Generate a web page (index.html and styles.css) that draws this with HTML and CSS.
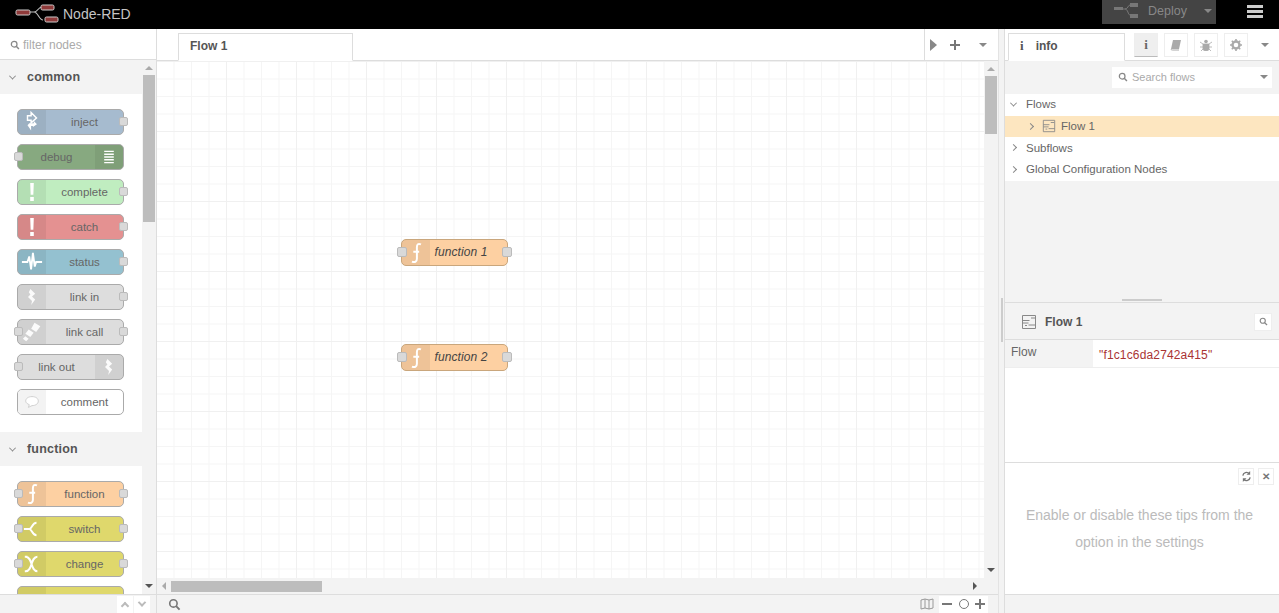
FILE: index.html
```html
<!DOCTYPE html>
<html lang="en">

<head>
    <meta charset="UTF-8">
    <title>Node-RED</title>
    <link rel="stylesheet" href="styles.css">
</head>

<body>
    <svg class="sprites" width="0" height="0">
        <symbol id="i-inject" viewBox="0 0 20 24">
            <path d="M9 1.500l6 6-6 5.500V10H5V5h4z" fill="none" stroke="#fff" stroke-width="1.600" />
            <path d="M5 15.500l2-2h5v-2.500l3.500 3.500-4.500 3v-1H9v5z" fill="#fff" />
        </symbol>
        <symbol id="i-list" viewBox="0 0 20 24">
            <path d="M4 5h12M4 8.500h12M4 12h12M4 15.500h12M4 19h12" stroke="#fff" stroke-width="1.800" />
        </symbol>
        <symbol id="i-alert" viewBox="0 0 20 24">
            <path d="M8 2h4l-.5 13h-3z M8 17.500h4V22H8z" fill="#fff" />
        </symbol>
        <symbol id="i-status" viewBox="0 0 24 24">
            <path d="M1 12h6l2-6 2 14 2-18 2 15 1.500-5H23" fill="none" stroke="#fff" stroke-width="2" />
        </symbol>
        <symbol id="i-link" viewBox="0 0 20 24">
            <path d="M8 2l6 6-4 3.500L14 15l-5 7 1-5-5-5 3-3-2-3z" fill="#fff" opacity=".9" />
        </symbol>
        <symbol id="i-call" viewBox="0 0 24 24">
            <path d="M15 1l7 4-5 7-6-4z M8 9l6 4-4 5-6-4z M4 17l4 3-3 3-4-3z" fill="#fff" opacity=".9" />
        </symbol>
        <symbol id="i-comment" viewBox="0 0 20 24">
            <path d="M3 11c0-3 3-5 7-5s7 2 7 5-3 5-7 5l-4 2 1-3c-2-.8-4-2.200-4-4z" fill="#fff" stroke="#ccc" />
        </symbol>
        <symbol id="i-func" viewBox="0 0 20 24">
            <path d="M15.500 2.500c-3-1.500-4.500 0-4.500 3v13c0 3-2 4.500-5.500 3M7 10.500h6.500" fill="none" stroke="#fff" stroke-width="2.200" />
        </symbol>
        <symbol id="i-switch" viewBox="0 0 20 24">
            <path d="M1 12h6c3 0 3-7 8-7M7 12c3 0 3 7 8 7" fill="none" stroke="#fff" stroke-width="2.200" />
        </symbol>
        <symbol id="i-change" viewBox="0 0 20 24">
            <path d="M3 4c8 0 5 16 13 16M3 20c8 0 5-16 13-16M2 4h3M2 20h3" fill="none" stroke="#fff" stroke-width="2.200" />
        </symbol>
        <symbol id="i-flow" viewBox="0 0 16 16">
            <path d="M1.500 1.500h13v13h-13z M1.500 6.500h7M7.500 11h7M1.500 9h6" fill="none" stroke="currentColor" />
            <path d="M10 4h4M4 11.500h2" stroke="currentColor" />
        </symbol>
        <symbol id="i-search" viewBox="0 0 12 12">
            <circle cx="5" cy="5" r="3.400" fill="none" stroke="currentColor" stroke-width="1.500" />
            <path d="M7.500 7.500l3.200 3.200" stroke="currentColor" stroke-width="1.800" />
        </symbol>
    </svg>

    <header class="topbar">
        <div class="logo">
            <svg width="44" height="20" viewBox="0 0 44 20">
                <path d="M14 8h5c4 0 4-5 8-5M19 8c4 0 5 8 9 8" fill="none" stroke="#bbb" stroke-width="1.200" />
                <rect x="1" y="6" width="14" height="5" rx="1.500" fill="#8f3a3a" stroke="#ccc" />
                <rect x="26" y="1" width="13" height="5" rx="1.500" fill="#8f3a3a" stroke="#ccc" />
                <rect x="30" y="13" width="13" height="5" rx="1.500" fill="#8f3a3a" stroke="#ccc" />
            </svg>
            <span>Node-RED</span>
        </div>
        <div class="deploy">
            <svg width="26" height="16" viewBox="0 0 26 16">
                <path d="M9 6h3c3 0 3-4 5-4M12 6c3 0 3 6 5 6" fill="none" stroke="#777" />
                <rect x="1" y="4" width="9" height="3" fill="#777" />
                <rect x="17" y="0" width="8" height="4" fill="#777" />
                <rect x="17" y="11" width="8" height="4" fill="#777" />
            </svg>
            <span class="deploy-label">Deploy</span>
            <span class="caret deploy-caret"></span>
        </div>
        <div class="menu-btn"><span></span><span></span><span></span></div>
    </header>

    <main class="app">
        <aside class="palette">
            <div class="filter">
                <svg class="ico-search" width="10" height="10"><use href="#i-search" /></svg>
                <span>filter nodes</span>
            </div>
            <div class="palette-scroll">
                <div class="palette-list">
                    <h3 class="cat-header"><span class="chev-down"></span>common</h3>
                    <div class="cat-nodes">
                        <div class="node c-inject">
                            <div class="node-icon"><svg width="18" height="22"><use href="#i-inject" /></svg></div>
                            <div class="node-label">inject</div><i class="port port-r"></i>
                        </div>
                        <div class="node c-debug">
                            <i class="port port-l"></i>
                            <div class="node-label">debug</div>
                            <div class="node-icon icon-right"><svg width="16" height="22"><use href="#i-list" /></svg></div>
                        </div>
                        <div class="node c-complete">
                            <div class="node-icon"><svg width="18" height="22"><use href="#i-alert" /></svg></div>
                            <div class="node-label">complete</div><i class="port port-r"></i>
                        </div>
                        <div class="node c-catch">
                            <div class="node-icon"><svg width="18" height="22"><use href="#i-alert" /></svg></div>
                            <div class="node-label">catch</div><i class="port port-r"></i>
                        </div>
                        <div class="node c-status">
                            <div class="node-icon"><svg width="22" height="22"><use href="#i-status" /></svg></div>
                            <div class="node-label">status</div><i class="port port-r"></i>
                        </div>
                        <div class="node c-link">
                            <div class="node-icon"><svg width="16" height="20"><use href="#i-link" /></svg></div>
                            <div class="node-label">link in</div><i class="port port-r"></i>
                        </div>
                        <div class="node c-link">
                            <i class="port port-l"></i>
                            <div class="node-icon"><svg width="20" height="20"><use href="#i-call" /></svg></div>
                            <div class="node-label">link call</div><i class="port port-r"></i>
                        </div>
                        <div class="node c-link">
                            <i class="port port-l"></i>
                            <div class="node-label">link out</div>
                            <div class="node-icon icon-right"><svg width="16" height="20"><use href="#i-link" /></svg></div>
                        </div>
                        <div class="node c-comment">
                            <div class="node-icon"><svg width="18" height="22"><use href="#i-comment" /></svg></div>
                            <div class="node-label">comment</div>
                        </div>
                    </div>
                    <h3 class="cat-header"><span class="chev-down"></span>function</h3>
                    <div class="cat-nodes">
                        <div class="node c-function">
                            <i class="port port-l"></i>
                            <div class="node-icon"><svg width="18" height="22"><use href="#i-func" /></svg></div>
                            <div class="node-label">function</div><i class="port port-r"></i>
                        </div>
                        <div class="node c-switch">
                            <i class="port port-l"></i>
                            <div class="node-icon"><svg width="18" height="22"><use href="#i-switch" /></svg></div>
                            <div class="node-label">switch</div><i class="port port-r"></i>
                        </div>
                        <div class="node c-switch">
                            <i class="port port-l"></i>
                            <div class="node-icon"><svg width="18" height="22"><use href="#i-change" /></svg></div>
                            <div class="node-label">change</div><i class="port port-r"></i>
                        </div>
                        <div class="node c-switch"><div class="node-icon"></div></div>
                    </div>
                </div>
                <div class="vscroll vscroll-palette">
                    <span class="arrow-up"></span>
                    <div class="thumb thumb-palette"></div>
                    <span class="arrow-down"></span>
                </div>
            </div>
            <footer class="bar bar-palette">
                <span class="bar-btn"><i class="chev-up"></i></span>
                <span class="bar-btn"><i class="chev-down chev-bold"></i></span>
            </footer>
        </aside>

        <section class="workspace">
            <div class="tabs">
                <div class="tab">Flow 1</div>
                <div class="tab-tools">
                    <span class="play"></span>
                    <span class="plus"></span>
                    <span class="caret caret-grey"></span>
                </div>
            </div>
            <div class="canvas-wrap">
                <div class="canvas">
                    <div class="node c-function flow-node node-one">
                        <i class="port port-l"></i>
                        <div class="node-icon"><svg width="18" height="22"><use href="#i-func" /></svg></div>
                        <div class="node-label">function 1</div><i class="port port-r"></i>
                    </div>
                    <div class="node c-function flow-node node-two">
                        <i class="port port-l"></i>
                        <div class="node-icon"><svg width="18" height="22"><use href="#i-func" /></svg></div>
                        <div class="node-label">function 2</div><i class="port port-r"></i>
                    </div>
                </div>
                <div class="vscroll vscroll-canvas">
                    <span class="arrow-up"></span>
                    <div class="thumb thumb-canvas"></div>
                    <span class="arrow-down"></span>
                </div>
            </div>
            <div class="hscroll">
                <span class="arrow-left"></span>
                <div class="hthumb"></div>
                <span class="arrow-right"></span>
            </div>
            <footer class="bar bar-workspace">
                <svg class="ws-search" width="13" height="13"><use href="#i-search" /></svg>
                <div class="zoom-tools">
                    <svg class="map-ico" width="14" height="12" viewBox="0 0 14 12">
                        <path d="M1 2l4-1 4 1 4-1v9l-4 1-4-1-4 1z M5 1v9M9 2v9" fill="none" stroke="#999" />
                    </svg>
                    <div class="zoom-group">
                        <span class="minus"></span>
                        <span class="ring"></span>
                        <span class="plus"></span>
                    </div>
                </div>
            </footer>
        </section>

        <div class="separator"><span></span></div>

        <aside class="sidebar">
            <div class="side-tabs">
                <div class="side-tab"><b class="info-i">i</b><b>info</b></div>
                <div class="side-btn side-btn-on"><b class="info-i">i</b></div>
                <div class="side-btn">
                    <svg width="12" height="12" viewBox="0 0 12 12"><path d="M3 1h8L9 10H1z" fill="#aaa" /><path d="M1 10c0 1 1 1 2 1h6" fill="none" stroke="#aaa" /></svg>
                </div>
                <div class="side-btn">
                    <svg width="12" height="12" viewBox="0 0 12 12"><circle cx="6" cy="2.500" r="1.800" fill="#aaa" /><path d="M3 5h6v5c0 1-1.500 2-3 2s-3-1-3-2z M0 3l3 2M12 3L9 5M0 8h3M12 8H9M1 12l2-2M11 12L9 10" fill="#aaa" stroke="#aaa" stroke-width=".8" /></svg>
                </div>
                <div class="side-btn">
                    <svg width="12" height="12" viewBox="0 0 12 12"><circle cx="6" cy="6" r="3.500" fill="none" stroke="#aaa" stroke-width="2.400" /><path d="M6 0v2M6 10v2M0 6h2M10 6h2M1.800 1.800l1.400 1.400M8.800 8.800l1.400 1.400M1.800 10.200l1.400-1.400M8.800 3.200l1.400-1.400" stroke="#aaa" stroke-width="1.600" /></svg>
                </div>
                <span class="caret caret-grey side-caret"></span>
            </div>
            <div class="search-row">
                <div class="search-box">
                    <svg class="ico-search" width="10" height="10"><use href="#i-search" /></svg>
                    <span>Search flows</span>
                    <span class="caret caret-grey search-caret"></span>
                </div>
            </div>
            <ul class="tree">
                <li class="tree-row"><span class="chev-down"></span>Flows</li>
                <li class="tree-row tree-flow">
                    <span class="chev-right"></span>
                    <svg class="flow-ico" width="14" height="14"><use href="#i-flow" /></svg>
                    Flow 1
                </li>
                <li class="tree-row"><span class="chev-right"></span>Subflows</li>
                <li class="tree-row"><span class="chev-right"></span>Global Configuration Nodes</li>
            </ul>
            <div class="tree-rest"></div>
            <div class="handle"><span></span></div>
            <div class="props-head">
                <svg class="flow-ico" width="16" height="16"><use href="#i-flow" /></svg>
                <b>Flow 1</b>
                <span class="props-btn"><svg width="9" height="9"><use href="#i-search" /></svg></span>
            </div>
            <div class="props-row">
                <div class="props-key">Flow</div>
                <div class="props-val">"f1c1c6da2742a415"</div>
            </div>
            <div class="props-rest"></div>
            <div class="tips">
                <div class="tips-tools">
                    <span class="tip-btn">
                        <svg width="11" height="11" viewBox="0 0 12 12"><path d="M2 5a4 4 0 0 1 7-2M10 7a4 4 0 0 1-7 2" fill="none" stroke="#777" stroke-width="1.500" /><path d="M10 0v4H6zM2 12V8h4z" fill="#777" /></svg>
                    </span>
                    <span class="tip-btn tip-close">&#10005;</span>
                </div>
                <p>Enable or disable these tips from the option in the settings</p>
            </div>
            <footer class="bar"></footer>
        </aside>
    </main>
</body>

</html>
```

FILE: styles.css
```css
* {
    box-sizing: border-box;
}

html, body {
    height: 100%;
}

body {
    margin: 0;
    overflow: hidden;
    display: flex;
    flex-direction: column;
    font-family: "Liberation Sans", Arial, sans-serif;
    font-size: 12px;
    color: #555;
    background: #fff;
}

.sprites {
    position: absolute;
}

/* --- barra superior --- */
.topbar {
    height: 29px;
    flex: none;
    display: flex;
    align-items: flex-start;
    background: #000;
}

.logo {
    display: flex;
    align-items: center;
    gap: 4px;
    height: 27px;
    padding-left: 15px;
    font-size: 14px;
    color: #c4c4c4;
}

.deploy {
    margin-left: auto;
    width: 114px;
    height: 24px;
    display: flex;
    align-items: center;
    padding: 0 0 2px 11px;
    background: #444;
    color: #888;
    font-size: 12.500px;
}

.deploy-label {
    margin-left: 9px;
}

.deploy-caret {
    margin-left: 17px;
    border-top-color: #bbb;
}

.menu-btn {
    width: 63px;
    padding: 5px 0 0 31px;
}

.menu-btn span {
    display: block;
    width: 16px;
    height: 3px;
    margin-bottom: 2px;
    background: #ccc;
}

.caret {
    display: inline-block;
    width: 0;
    height: 0;
    border-left: 4px solid transparent;
    border-right: 4px solid transparent;
    border-top: 4px solid #888;
}

.app {
    flex: 1;
    min-height: 0;
    display: flex;
}

/* --- paleta de nodos --- */
.palette {
    width: 157px;
    flex: none;
    display: flex;
    flex-direction: column;
    border-right: 1px solid #ddd;
}

.filter {
    height: 31px;
    flex: none;
    display: flex;
    align-items: center;
    gap: 3px;
    padding: 1px 0 0 10px;
    border-bottom: 1px solid #ddd;
    color: #aaa;
}

.ico-search {
    color: #888;
}

.palette-scroll {
    flex: 1;
    min-height: 0;
    display: flex;
}

.palette-list {
    flex: 1;
    overflow: hidden;
}

.cat-header {
    margin: 0;
    height: 34px;
    display: flex;
    align-items: center;
    padding-left: 10px;
    background: #f3f3f3;
    font-size: 12.500px;
    letter-spacing: .2px;
    color: #555;
}

.cat-header .chev-down {
    margin-right: 12px;
}

.chev-down, .chev-right {
    display: inline-block;
    width: 5px;
    height: 5px;
    border-right: 1px solid #888;
    border-bottom: 1px solid #888;
}

.chev-down {
    transform: rotate(45deg) translate(-1px, -1px);
}

.chev-right {
    transform: rotate(-45deg);
}

.cat-nodes {
    display: flex;
    flex-direction: column;
    gap: 9px;
    padding: 15px 0 17px 17px;
}

.node {
    position: relative;
    width: 107px;
    height: 26px;
    flex: none;
    display: flex;
    border: 1px solid #aaa;
    border-radius: 5px;
    color: #666;
    font-size: 11.500px;
}

.node-icon {
    width: 28px;
    flex: none;
    display: flex;
    align-items: center;
    justify-content: center;
    background: rgba(0, 0, 0, .06);
    border-radius: 4px 0 0 4px;
}

.icon-right {
    border-radius: 0 4px 4px 0;
}

.node-label {
    flex: 1;
    text-align: center;
    line-height: 24px;
}

.port {
    position: absolute;
    top: 7px;
    width: 9px;
    height: 9px;
    background: #d9d9d9;
    border: 1px solid #bbb;
    border-radius: 2px;
}

.port-l {
    left: -4px;
}

.port-r {
    right: -5px;
}

.c-inject { background: #a6bbcf; }
.c-debug { background: #87a980; }
.c-complete { background: #c0edc0; }
.c-catch { background: #e49191; }
.c-status { background: #94c1d0; }
.c-link { background: #dddddd; }
.c-comment { background: #fff; }
.c-function { background: #fdd0a2; }
.c-switch { background: #dfd86c; }

.c-comment .node-icon {
    background: #f3f3f3;
}

/* --- barras de desplazamiento --- */
.vscroll {
    width: 14px;
    flex: none;
    position: relative;
    background: #f3f3f3;
}

.thumb {
    position: absolute;
    left: 1px;
    right: 1px;
    background: #bdbdbd;
}

.thumb-palette {
    top: 15px;
    height: 147px;
}

.thumb-canvas {
    top: 15px;
    height: 58px;
}

.arrow-up, .arrow-down {
    position: absolute;
    left: 3px;
    width: 0;
    height: 0;
    border-left: 4px solid transparent;
    border-right: 4px solid transparent;
}

.arrow-up {
    top: 6px;
    border-bottom: 4px solid #aaa;
}

.arrow-down {
    bottom: 6px;
    border-top: 4px solid #555;
}

.bar {
    height: 19px;
    flex: none;
    display: flex;
    align-items: center;
    background: #f3f3f3;
    border-top: 1px solid #ddd;
}

.bar-palette {
    justify-content: flex-end;
    gap: 1px;
    padding-right: 6px;
}

.bar-btn {
    width: 16px;
    height: 17px;
    display: flex;
    align-items: center;
    justify-content: center;
    background: #fff;
}

.chev-up {
    display: block;
    width: 6px;
    height: 6px;
    margin-top: 3px;
    border-left: 2px solid #bbb;
    border-top: 2px solid #bbb;
    transform: rotate(45deg);
}

.chev-bold {
    width: 6px;
    height: 6px;
    border-right: 2px solid #bbb;
    border-bottom: 2px solid #bbb;
}

/* --- espacio de trabajo --- */
.workspace {
    flex: 1;
    min-width: 0;
    display: flex;
    flex-direction: column;
}

.tabs {
    height: 32px;
    flex: none;
    display: flex;
    padding-top: 4px;
    border-bottom: 1px solid #ddd;
}

.tab {
    width: 175px;
    height: 28px;
    margin-left: 21px;
    padding: 5px 0 0 11px;
    background: #fff;
    border: 1px solid #ddd;
    border-bottom: 1px solid #fff;
    font-weight: bold;
    color: #555;
}

.tab-tools {
    margin-left: auto;
    width: 74px;
    margin-top: -4px;
    display: flex;
    align-items: center;
    padding-left: 5px;
    border-left: 1px solid #ddd;
}

.play {
    width: 0;
    height: 0;
    border-top: 6px solid transparent;
    border-bottom: 6px solid transparent;
    border-left: 7px solid #888;
}

.plus {
    position: relative;
    display: inline-block;
    width: 10px;
    height: 10px;
    background: linear-gradient(#777, #777) center / 10px 2px no-repeat,
        linear-gradient(#777, #777) center / 2px 10px no-repeat;
}

.tab-tools .plus {
    margin-left: 13px;
}

.tab-tools .caret {
    margin-left: 19px;
}

.canvas-wrap {
    flex: 1;
    min-height: 0;
    display: flex;
}

.canvas {
    flex: 1;
    position: relative;
    overflow: hidden;
    background-color: #fff;
    background-image:
        linear-gradient(to right, #f0f0f0 1px, transparent 1px),
        linear-gradient(to bottom, #f0f0f0 1px, transparent 1px),
        linear-gradient(to right, #f5f5f5 1px, transparent 1px),
        linear-gradient(to bottom, #f5f5f5 1px, transparent 1px);
    background-size: 70px 70px, 70px 70px, 17.500px 17.500px, 17.500px 17.500px;
    background-position: -1px 0;
}

.flow-node {
    position: absolute;
    height: 27px;
    color: #444;
    font-style: italic;
    font-size: 12px;
    border-color: #c9a67c;
}

.flow-node .node-label {
    line-height: 25px;
    padding-right: 15px;
    letter-spacing: .1px;
}

.flow-node .port {
    width: 10px;
    height: 10px;
}

.flow-node .port-l {
    left: -5px;
}

.node-one {
    left: 244px;
    top: 178px;
}

.node-two {
    left: 244px;
    top: 283px;
}

.hscroll {
    height: 16px;
    flex: none;
    position: relative;
    background: #f3f3f3;
}

.hthumb {
    position: absolute;
    left: 14px;
    top: 3px;
    width: 151px;
    height: 11px;
    background: #bdbdbd;
}

.arrow-left, .arrow-right {
    position: absolute;
    top: 4px;
    width: 0;
    height: 0;
    border-top: 4px solid transparent;
    border-bottom: 4px solid transparent;
}

.arrow-left {
    left: 5px;
    border-right: 4px solid #aaa;
}

.arrow-right {
    right: 21px;
    border-left: 4px solid #555;
}

.bar-workspace {
    padding: 0 10px 0 11px;
    justify-content: space-between;
}

.ws-search {
    color: #777;
}

.zoom-tools {
    display: flex;
    align-items: center;
    height: 17px;
}

.map-ico {
    margin-right: 5px;
}

.zoom-group {
    height: 17px;
    display: flex;
    align-items: center;
    gap: 6.500px;
    padding: 0 3px;
    background: #fff;
}

.zoom-group .minus {
    width: 10px;
    height: 2px;
    background: #777;
}

.zoom-group .ring {
    width: 10px;
    height: 10px;
    border: 1.500px solid #777;
    border-radius: 50%;
}

.separator {
    width: 7px;
    flex: none;
    background: #f3f3f3;
    border-left: 1px solid #e3e3e3;
    border-right: 1px solid #ddd;
}

.separator span {
    display: block;
    width: 2px;
    height: 44px;
    margin: 269px 0 0 2px;
    background: #ccc;
}

/* --- barra lateral --- */
.sidebar {
    width: 274px;
    flex: none;
    display: flex;
    flex-direction: column;
}

.side-tabs {
    height: 32px;
    flex: none;
    display: flex;
    align-items: flex-start;
    padding: 4px 0 0 3px;
    border-bottom: 1px solid #ddd;
}

.side-tab {
    width: 117px;
    height: 28px;
    display: flex;
    align-items: center;
    padding: 0 0 2px 11px;
    gap: 12px;
    background: #fff;
    border: 1px solid #ddd;
    border-bottom: 1px solid #fff;
    color: #555;
}

.info-i {
    font-family: "Liberation Serif", serif;
    font-size: 13px;
}

.side-btn {
    width: 24px;
    height: 24px;
    margin-left: 6px;
    display: flex;
    align-items: center;
    justify-content: center;
    border: 1px solid #eee;
    color: #666;
}

.side-btn:nth-child(2) {
    margin-left: 9px;
}

.side-btn-on {
    background: #efefef;
    border-bottom: 1px solid #bbb;
}

.side-caret {
    margin: 10px 0 0 13px;
}

.search-row {
    height: 33px;
    flex: none;
    padding: 6px 7px 0 107px;
    background: #f3f3f3;
}

.search-box {
    height: 21px;
    display: flex;
    align-items: center;
    gap: 4px;
    padding: 0 0 2px 6px;
    background: #fff;
    color: #aaa;
    font-size: 11px;
}

.search-caret {
    margin-left: auto;
    margin-right: 4px;
}

.tree {
    margin: 0;
    padding: 0;
    list-style: none;
    background: #fff;
    flex: none;
    font-size: 11.500px;
    color: #666;
}

.tree-row {
    height: 21.700px;
    display: flex;
    align-items: center;
    padding: 0 0 1px 6px;
}

.tree-row > .chev-down, .tree-row > .chev-right {
    margin-right: 10px;
}

.tree-flow {
    padding-left: 23px;
    background: #fde6c0;
    color: #666;
}

.tree-flow > .chev-right {
    margin-right: 9px;
}

.flow-ico {
    color: #888;
    margin-right: 5px;
    flex: none;
}

.tree-rest {
    flex: 1;
    background: #f3f3f3;
}

.handle {
    height: 7px;
    flex: none;
    display: flex;
    justify-content: center;
    background: #f3f3f3;
    border-bottom: 1px solid #ddd;
}

.handle span {
    width: 40px;
    height: 2px;
    margin-top: 3px;
    background: #ccc;
}

.props-head {
    height: 37px;
    flex: none;
    display: flex;
    align-items: center;
    padding: 1px 7px 0 16px;
    background: #f3f3f3;
    border-bottom: 1px solid #ddd;
    color: #555;
}

.props-head .flow-ico {
    margin-right: 8px;
}

.props-btn {
    margin-left: auto;
    width: 18px;
    height: 18px;
    display: flex;
    align-items: center;
    justify-content: center;
    background: #fff;
    border: 1px solid #eee;
    color: #888;
}

.props-row {
    height: 28px;
    flex: none;
    display: flex;
    border-bottom: 1px solid #eee;
}

.props-key {
    width: 88px;
    padding: 5px 0 0 6px;
    background: #f3f3f3;
    color: #666;
}

.props-val {
    padding: 8px 0 0 6px;
    color: #a33;
    letter-spacing: .15px;
}

.props-rest {
    height: 94px;
    flex: none;
}

.tips {
    height: 132px;
    flex: none;
    position: relative;
    border-top: 1px solid #ddd;
    background: #fff;
}

.tips p {
    margin: 39px 21px 0 16px;
    text-align: center;
    color: #bbb;
    font-size: 14px;
    line-height: 27px;
}

.tips-tools {
    position: absolute;
    top: 5px;
    right: 5px;
    display: flex;
    gap: 4px;
}

.tip-btn {
    width: 16px;
    height: 17px;
    display: flex;
    align-items: center;
    justify-content: center;
    border: 1px solid #eee;
    background: #fff;
}

.tip-close {
    font-size: 10px;
    font-weight: bold;
    color: #777;
}
```
